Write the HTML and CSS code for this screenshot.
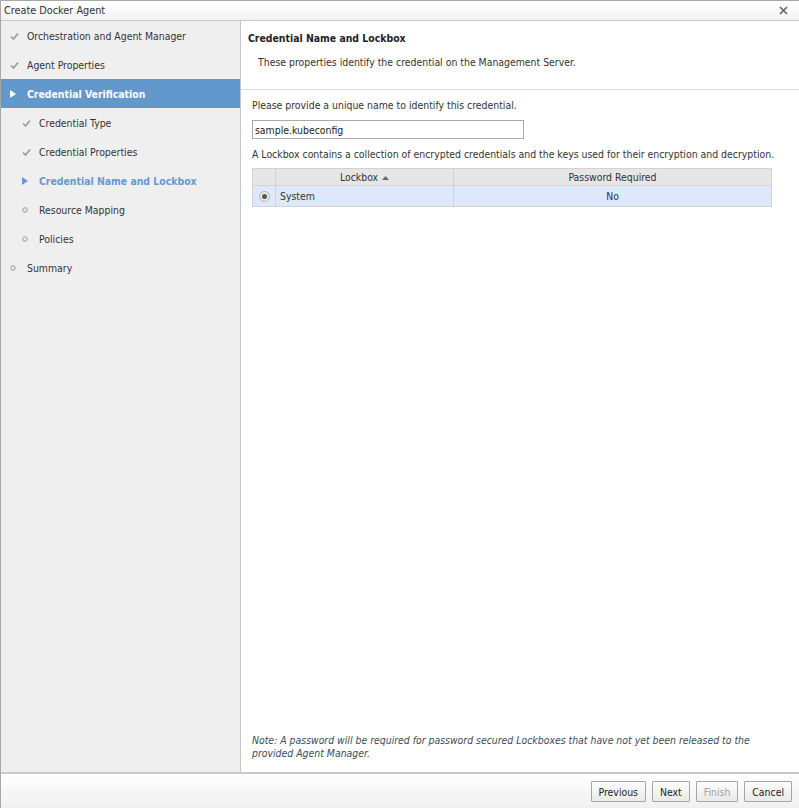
FILE: index.html
```html
<!DOCTYPE html>
<html>
<head>
<meta charset="utf-8">
<title>Create Docker Agent</title>
<link rel="stylesheet" href="styles.css">
</head>
<body>
<div class="window">
  <div class="titlebar">
    <span class="title">Create Docker Agent</span>
    <svg class="close" width="9" height="9" viewBox="0 0 9 9"><path d="M1 1L8 8M8 1L1 8" stroke="#666" stroke-width="1.6"/></svg>
  </div>
  <div class="main">
    <nav class="sidebar">
      <div class="step done"><span class="ico"><svg width="9" height="8" viewBox="0 0 9 8"><path d="M1 4.5L3.5 7L8 1.5" fill="none" stroke="#999" stroke-width="1.6"/></svg></span>Orchestration and Agent Manager</div>
      <div class="step done"><span class="ico"><svg width="9" height="8" viewBox="0 0 9 8"><path d="M1 4.5L3.5 7L8 1.5" fill="none" stroke="#999" stroke-width="1.6"/></svg></span>Agent Properties</div>
      <div class="step active"><span class="ico"><svg width="6" height="8" viewBox="0 0 6 8"><path d="M0 0L6 4L0 8Z" fill="#fff"/></svg></span>Credential Verification</div>
      <div class="step sub done"><span class="ico"><svg width="9" height="8" viewBox="0 0 9 8"><path d="M1 4.5L3.5 7L8 1.5" fill="none" stroke="#999" stroke-width="1.6"/></svg></span>Credential Type</div>
      <div class="step sub done"><span class="ico"><svg width="9" height="8" viewBox="0 0 9 8"><path d="M1 4.5L3.5 7L8 1.5" fill="none" stroke="#999" stroke-width="1.6"/></svg></span>Credential Properties</div>
      <div class="step sub current"><span class="ico"><svg width="6" height="8" viewBox="0 0 6 8"><path d="M0 0L6 4L0 8Z" fill="#6599d2"/></svg></span>Credential Name and Lockbox</div>
      <div class="step sub"><span class="ico"><svg width="6" height="6" viewBox="0 0 6 6"><circle cx="3" cy="3" r="2.2" fill="none" stroke="#999" stroke-width="1"/></svg></span>Resource Mapping</div>
      <div class="step sub"><span class="ico"><svg width="6" height="6" viewBox="0 0 6 6"><circle cx="3" cy="3" r="2.2" fill="none" stroke="#999" stroke-width="1"/></svg></span>Policies</div>
      <div class="step"><span class="ico"><svg width="6" height="6" viewBox="0 0 6 6"><circle cx="3" cy="3" r="2.2" fill="none" stroke="#999" stroke-width="1"/></svg></span>Summary</div>
    </nav>
    <section class="content">
      <header class="head">
        <h1>Credential Name and Lockbox</h1>
        <p class="sub">These properties identify the credential on the Management Server.</p>
      </header>
      <div class="body">
        <p class="label">Please provide a unique name to identify this credential.</p>
        <input class="name" type="text" value="sample.kubeconfig">
        <p class="label2">A Lockbox contains a collection of encrypted credentials and the keys used for their encryption and decryption.</p>
        <table class="grid">
          <thead>
            <tr>
              <th class="sel"></th>
              <th class="lb">Lockbox <svg width="7" height="4" viewBox="0 0 7 4"><path d="M0 4L3.5 0L7 4Z" fill="#5f6d7c"/></svg></th>
              <th class="pw">Password Required</th>
            </tr>
          </thead>
          <tbody>
            <tr>
              <td class="sel"><span class="radio"><span class="dot"></span></span></td>
              <td class="lb">System</td>
              <td class="pw">No</td>
            </tr>
          </tbody>
        </table>
        <p class="note">Note: A password will be required for password secured Lockboxes that have not yet been released to the provided Agent Manager.</p>
      </div>
    </section>
  </div>
  <footer class="footer">
    <button class="btn">Previous</button>
    <button class="btn">Next</button>
    <button class="btn disabled">Finish</button>
    <button class="btn">Cancel</button>
  </footer>
</div>
</body>
</html>
```

FILE: styles.css
```css
* { box-sizing: border-box; }
html, body { margin: 0; padding: 0; background: #fff; }
body {
  font-family: "DejaVu Sans Condensed", "DejaVu Sans", sans-serif;
  font-size: 10.4px;
  color: #333;
}
.window {
  width: 799px;
  height: 808px;
  display: flex;
  flex-direction: column;
  border-left: 1px solid #a8a8a8;
  border-top: 1px solid #a8a8a8;
}
.titlebar {
  height: 20px;
  flex: none;
  display: flex;
  align-items: center;
  justify-content: space-between;
  padding: 0 11px 0 3px;
  background: linear-gradient(#ffffff, #f2f2f2);
  border-bottom: 1px solid #c8c8c8;
  font-size: 10.8px;
  color: #333;
}
.close { display: block; }
.main {
  flex: 1;
  display: flex;
  min-height: 0;
}
.sidebar {
  width: 240px;
  flex: none;
  background: #efefef;
  border-right: 1px solid #c6c6c6;
  padding-top: 0;
}
.step {
  height: 29px;
  display: flex;
  align-items: center;
  padding-left: 9px;
  color: #333;
}
.step .ico {
  width: 17px;
  flex: none;
  display: flex;
  align-items: center;
}
.step.sub { padding-left: 21px; }
.step.active {
  background: #6398cd;
  color: #fff;
  font-weight: bold;
}
.step.current {
  color: #6599d2;
  font-weight: bold;
}
.step .ico svg { display: block; }
.content {
  flex: 1;
  display: flex;
  flex-direction: column;
  min-width: 0;
}
.head {
  height: 69px;
  flex: none;
  border-bottom: 1px solid #dcdcdc;
  padding: 10px 0 0 7px;
}
.head h1 {
  margin: 0;
  font-size: 10.4px;
  font-weight: bold;
  color: #222;
  line-height: 15px;
}
.head .sub {
  margin: 9px 0 0 10px;
  line-height: 15px;
}
.body {
  flex: 1;
  display: flex;
  flex-direction: column;
  padding: 8px 12px 12px 11px;
}
.label { margin: 0; line-height: 15px; }
.name {
  margin-top: 7px;
  width: 272px;
  height: 19px;
  border: 1px solid #a9a9a9;
  font: inherit;
  color: #222;
  padding: 0 2px;
  outline: none;
}
.label2 { margin: 8px 0 0; line-height: 15px; white-space: nowrap; }
.grid {
  margin-top: 6px;
  border-collapse: collapse;
  width: 520px;
  margin-left: 0;
}
.grid th, .grid td {
  border: 1px solid #d2d2d2;
  font-weight: normal;
  padding: 0;
}
.grid th {
  background: #e6e6e6;
  height: 17px;
  text-align: center;
}
.grid td {
  background: #dde8fb;
  height: 21px;
}
.grid .sel { width: 23px; }
.grid .lb { width: 178px; }
.grid td.lb { padding-left: 4px; }
.grid td.pw { text-align: center; }
.grid th.lb svg { vertical-align: 1px; margin-left: 1px; }
.radio {
  display: block;
  margin: 0 auto;
  width: 11px;
  height: 11px;
  border-radius: 50%;
  border: 1px solid #b5b5b5;
  background: radial-gradient(#fafafa, #dcdcdc);
  position: relative;
}
.radio .dot {
  position: absolute;
  left: 2px;
  top: 2px;
  width: 5px;
  height: 5px;
  border-radius: 50%;
  background: #555;
}
.note {
  margin: auto 0 0;
  padding-right: 14px;
  font-style: italic;
  color: #3c4a5a;
  line-height: 13px;
}
.footer {
  height: 36px;
  flex: none;
  border-top: 2px solid #c8c8c8;
  background: linear-gradient(#ffffff, #f0f0f0);
  display: flex;
  justify-content: flex-end;
  align-items: flex-start;
  gap: 6px;
  padding: 7px 7px 0 0;
}
.btn {
  height: 21px;
  font: inherit;
  color: #222;
  border: 1px solid #a6a6a6;
  background: linear-gradient(#fdfdfd, #e9e9e9);
  padding: 0 7px;
  border-radius: 1px;
}
.btn.disabled { color: #a0a0a0; }
```
